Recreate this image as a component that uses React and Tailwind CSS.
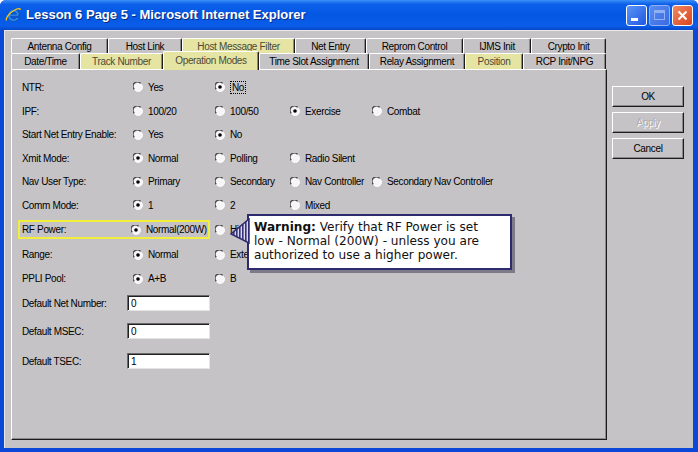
import React from 'react';

const UI = "font-['Liberation_Sans',Arial,sans-serif]";

const tabs1 = [
  ['Antenna Config', 'w-[97px]'],
  ['Host Link', 'w-[74px]'],
  ['Host Message Filter', 'w-[113px]', 'y'],
  ['Net Entry', 'w-[71px]'],
  ['Reprom Control', 'w-[97px]'],
  ['IJMS Init', 'w-[68px]'],
  ['Crypto Init', 'w-[75px]'],
];

const tabs2 = [
  ['Date/Time', 'w-[69px]'],
  ['Track Number', 'w-[83px]', 'y'],
  ['Operation Modes', 'w-[96px]', 'sel'],
  ['Time Slot Assignment', 'w-[110px]'],
  ['Relay Assignment', 'w-[96px]'],
  ['Position', 'w-[58px]', 'y'],
  ['RCP Init/NPG', 'w-[83px]'],
];

const cols = ['w-[82px]', 'w-[75px]', 'w-[82px]', ''];

const rows = [
  { label: 'NTR:', h: 'h-[24px]', opts: [['Yes'], ['No', true, true]] },
  { label: 'IPF:', h: 'h-[24px]', opts: [['100/20'], ['100/50'], ['Exercise', true], ['Combat']] },
  { label: 'Start Net Entry Enable:', h: 'h-[23px]', opts: [['Yes'], ['No', true]] },
  { label: 'Xmit Mode:', h: 'h-[24px]', opts: [['Normal', true], ['Polling'], ['Radio Silent']] },
  { label: 'Nav User Type:', h: 'h-[23px]', opts: [['Primary', true], ['Secondary'], ['Nav Controller'], ['Secondary Nav Controller']] },
  { label: 'Comm Mode:', h: 'h-[24px]', opts: [['1', true], ['2'], ['Mixed']] },
];

const rows2 = [
  { label: 'Range:', h: 'h-[25px]', opts: [['Normal', true], ['Extended']] },
  { label: 'PPLI Pool:', h: 'h-[23px]', opts: [['A+B', true], ['B']] },
];

const fields = [
  ['Default Net Number:', '0', 'h-[26px]'],
  ['Default MSEC:', '0', 'h-[30px]'],
  ['Default TSEC:', '1', 'h-[30px]'],
];

function Radio({ on }) {
  return (
    <svg width="10" height="10" viewBox="0 0 10 10" className="shrink-0">
      <circle cx="5" cy="5" r="4.6" fill="#f6f6f6" />
      <path d="M1.2 7.2 A4.2 4.2 0 0 1 7.6 1.4" fill="none" stroke="#4a4a4a" strokeWidth="1.4" />
      <path d="M8.6 2.8 A4.2 4.2 0 0 1 2.6 8.6" fill="none" stroke="#ffffff" strokeWidth="1" />
      {on && <circle cx="5" cy="5" r="1.8" fill="#000" />}
    </svg>
  );
}

function Opt({ text, on, focus, w }) {
  return (
    <div className={`${w} flex items-center gap-[5px] whitespace-nowrap`}>
      <Radio on={on} />
      <span className={focus ? 'border border-dotted border-black px-[1px] leading-[11px]' : ''}>{text}</span>
    </div>
  );
}

function Row({ r }) {
  return (
    <div className={`${r.h} flex items-center`}>
      <div className="w-[115px] pl-[4px] whitespace-nowrap">{r.label}</div>
      {r.opts.map((o, i) => (
        <Opt key={i} text={o[0]} on={o[1]} focus={o[2]} w={cols[i]} />
      ))}
    </div>
  );
}

function Tab({ t }) {
  const [label, w, kind] = t;
  const bg = kind ? 'bg-[#e6e4a2] text-[#4a4a38]' : 'bg-[#c6c3c6] text-black';
  const shape = kind === 'sel' ? 'h-[19px] -mt-[2px] relative z-10 pb-[2px]' : 'h-full';
  return (
    <div
      className={`${w} ${shape} ${bg} flex items-center justify-center whitespace-nowrap border-t border-l border-white border-r border-r-[#1c1c1c] rounded-t-[2px] shadow-[inset_-1px_0_0_#8a8a8a]`}
    >
      {label}
    </div>
  );
}

function Btn({ children, disabled }) {
  return (
    <div className="w-[72px] h-[21px] flex items-center justify-center border-t border-l border-white border-r border-b border-r-[#1c1c1c] border-b-[#1c1c1c] shadow-[inset_-1px_-1px_0_#8a8a8a]">
      <span className={disabled ? 'text-[#aeacae] [text-shadow:1px_1px_0_#fff]' : 'text-black'}>{children}</span>
    </div>
  );
}

function IeIcon() {
  return (
    <svg width="16" height="16" viewBox="0 0 16 16">
      <path d="M12.8 9.2 H5.3 C5.6 11 7 12 8.6 12 C9.9 12 10.9 11.4 11.5 10.5 H14.2 C13.3 12.8 11.2 14.3 8.6 14.3 C5.3 14.3 2.8 11.7 2.8 8.4 C2.8 5.1 5.3 2.6 8.6 2.6 C11.9 2.6 14.2 5 14.2 8.2 Z M5.4 7.2 H11.6 C11.3 5.7 10.1 4.8 8.5 4.8 C6.9 4.8 5.7 5.7 5.4 7.2 Z" fill="#2f8ee8" stroke="#0b3c9a" strokeWidth="0.5" />
      <path d="M1.5 13.5 C0.5 11.5 4 6 9 3.5 C13 1.5 15.5 1 15.2 2.8" fill="none" stroke="#f5c518" strokeWidth="1.3" />
    </svg>
  );
}

export default function App() {
  return (
    <div className={`w-[698px] h-[452px] flex flex-col bg-[#0b48d8] rounded-t-[6px] overflow-hidden ${UI} text-[10px] tracking-[-0.35px] text-black`}>
      <div className="h-[30px] shrink-0 flex items-center bg-[linear-gradient(to_bottom,#3d8ff8_0%,#0d60ea_14%,#0457e2_50%,#0a5de9_86%,#0747c8_100%)]">
        <div className="ml-[5px]">
          <IeIcon />
        </div>
        <div className="ml-[5px] text-white font-bold text-[13px] tracking-normal [text-shadow:1px_1px_0_#0a2a7a]">
          Lesson 6 Page 5 - Microsoft Internet Explorer
        </div>
        <div className="ml-auto mr-[5px] flex gap-[2px]">
          <div className="w-[21px] h-[21px] rounded-[3px] border border-white bg-[linear-gradient(135deg,#5a95f8,#2158e0)] flex items-end pl-[4px] pb-[4px]">
            <div className="w-[7px] h-[3px] bg-white" />
          </div>
          <div className="w-[21px] h-[21px] rounded-[3px] border border-[#8fb0f2] bg-[linear-gradient(135deg,#5a8cf0,#3a6ae4)] flex items-center justify-center">
            <div className="w-[11px] h-[10px] border border-[#8fb0f2] border-t-[3px]" />
          </div>
          <div className="w-[21px] h-[21px] rounded-[3px] border border-white bg-[linear-gradient(135deg,#ef8a64,#d9431c)] flex items-center justify-center">
            <svg width="11" height="11" viewBox="0 0 11 11">
              <path d="M1.5 1.5 L9.5 9.5 M9.5 1.5 L1.5 9.5" stroke="#fff" strokeWidth="2" />
            </svg>
          </div>
        </div>
      </div>

      <div className="flex-1 ml-[4px] mr-[5px] mb-[4px] bg-[#c6c3c6] border-l border-t border-[#e8e8e8] pl-[6px] pt-[7px] flex">
        <div className="w-[596px] flex flex-col">
          <div className="h-[15px] flex">
            {tabs1.map((t) => (
              <Tab key={t[0]} t={t} />
            ))}
          </div>
          <div className="h-[16px] flex items-start">
            {tabs2.map((t) => (
              <Tab key={t[0]} t={t} />
            ))}
          </div>
          <div className="relative h-[371px] border-l border-t border-white border-r border-b border-r-[#1c1c1c] border-b-[#1c1c1c] shadow-[inset_-1px_-1px_0_#8a8a8a] pl-[6px] pt-[5px]">
            {rows.map((r) => (
              <Row key={r.label} r={r} />
            ))}
            <div className="h-[25px] flex items-center">
              <div className="w-[192px] h-[19px] border-2 border-[#f2ee3c] flex items-center">
                <div className="w-[111px] pl-[2px] whitespace-nowrap">RF Power:</div>
                <Opt text="Normal(200W)" on />
              </div>
              <div className="w-[5px]" />
              <Opt text="High" w="w-[75px]" />
            </div>
            {rows2.map((r) => (
              <Row key={r.label} r={r} />
            ))}
            {fields.map(([l, v, h]) => (
              <div key={l} className={`${h} flex items-center`}>
                <div className="w-[109px] pl-[4px] whitespace-nowrap">{l}</div>
                <div className="w-[83px] h-[16px] bg-white border-t border-l border-[#6a6a6a] border-r border-b border-r-[#e4e4e4] border-b-[#e4e4e4] shadow-[inset_1px_1px_0_#202020] pl-[3px] flex items-center">
                  {v}
                </div>
              </div>
            ))}

            <div className="absolute left-[218px] top-[148px] z-20">
              <svg width="20" height="26" viewBox="0 0 20 26">
                <defs>
                  <pattern id="stripes" width="3" height="4" patternUnits="userSpaceOnUse">
                    <rect width="3" height="4" fill="#d9d6f0" />
                    <rect width="1.6" height="4" fill="#38337a" />
                  </pattern>
                </defs>
                <polygon points="19,1 1,16 19,25" fill="url(#stripes)" stroke="#2e2a6e" strokeWidth="1.5" />
              </svg>
            </div>
            <div className="absolute left-[235px] top-[144px] w-[265px] h-[56px] z-10 bg-white border-2 border-[#2e2a6e] shadow-[3px_3px_0_#7d7a8a] pl-[5px] pt-[4px] font-['DejaVu_Sans',Verdana,sans-serif] text-[12.1px] tracking-normal leading-[14px] text-[#111] whitespace-nowrap">
              <b>Warning:</b> Verify that RF Power is set
              <br />
              low - Normal (200W) - unless you are
              <br />
              authorized to use a higher power.
            </div>
          </div>
        </div>

        <div className="ml-[5px] mt-[48px] flex flex-col gap-[5px]">
          <Btn>OK</Btn>
          <Btn disabled>Apply</Btn>
          <Btn>Cancel</Btn>
        </div>
      </div>
    </div>
  );
}
